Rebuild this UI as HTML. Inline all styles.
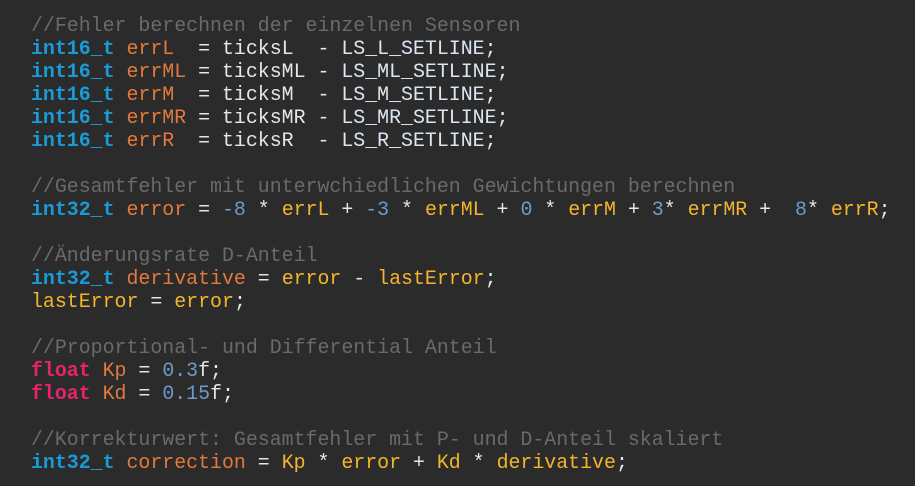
<!DOCTYPE html><html><head><style>
body{margin:0;background:#2b2b2b;width:915px;height:486px;overflow:hidden}
pre{margin:0;position:absolute;left:31px;top:14px;font-family:"Liberation Mono",monospace;font-size:19.9px;line-height:23px;color:#e6e6e6}
.c{color:#6a6a6a}.t{color:#1b9ad8;font-weight:bold}.v{color:#e5793b}.n{color:#6d9bc9}.k{color:#e5246b;font-weight:bold}.y{color:#f3b52c}.w{color:#dbe6f2}
</style></head><body><pre><span class="c">//Fehler berechnen der einzelnen Sensoren</span>
<span class="t">int16_t</span> <span class="v">errL</span>  = ticksL  - <span class="w">LS_L_SETLINE</span>;
<span class="t">int16_t</span> <span class="v">errML</span> = ticksML - <span class="w">LS_ML_SETLINE</span>;
<span class="t">int16_t</span> <span class="v">errM</span>  = ticksM  - <span class="w">LS_M_SETLINE</span>;
<span class="t">int16_t</span> <span class="v">errMR</span> = ticksMR - <span class="w">LS_MR_SETLINE</span>;
<span class="t">int16_t</span> <span class="v">errR</span>  = ticksR  - <span class="w">LS_R_SETLINE</span>;

<span class="c">//Gesamtfehler mit unterwchiedlichen Gewichtungen berechnen</span>
<span class="t">int32_t</span> <span class="v">error</span> = <span class="n">-8</span> * <span class="y">errL</span> + <span class="n">-3</span> * <span class="y">errML</span> + <span class="n">0</span> * <span class="y">errM</span> + <span class="n">3</span>* <span class="y">errMR</span> +  <span class="n">8</span>* <span class="y">errR</span>;

<span class="c">//Änderungsrate D-Anteil</span>
<span class="t">int32_t</span> <span class="v">derivative</span> = <span class="y">error</span> - <span class="y">lastError</span>;
<span class="y">lastError</span> = <span class="y">error</span>;

<span class="c">//Proportional- und Differential Anteil</span>
<span class="k">float</span> <span class="v">Kp</span> = <span class="n">0.3</span>f;
<span class="k">float</span> <span class="v">Kd</span> = <span class="n">0.15</span>f;

<span class="c">//Korrekturwert: Gesamtfehler mit P- und D-Anteil skaliert</span>
<span class="t">int32_t</span> <span class="v">correction</span> = <span class="y">Kp</span> * <span class="y">error</span> + <span class="y">Kd</span> * <span class="y">derivative</span>;</pre></body></html>
